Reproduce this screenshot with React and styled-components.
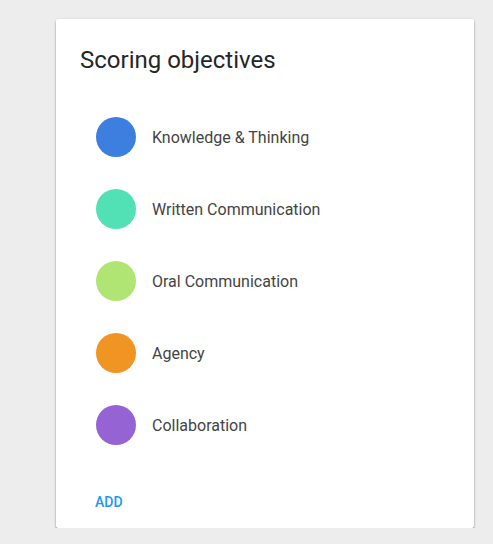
import React from "react";
import styled, { createGlobalStyle } from "styled-components";

const Global = createGlobalStyle`
  html, body { margin: 0; padding: 0; background: #ededed; }
  body { font-family: Roboto, "Liberation Sans", Arial, sans-serif; }
`;

const Page = styled.div`
  padding: 19px 0 0 56px;
`;

const Card = styled.section`
  width: 418px;
  min-height: 509px;
  box-sizing: border-box;
  background: #fff;
  border-radius: 2px;
  box-shadow: 0 2px 2px rgba(0, 0, 0, 0.42), 0 0 3px rgba(0, 0, 0, 0.1);
  display: flex;
  flex-direction: column;
`;

const Title = styled.h2`
  margin: 0;
  padding: 25px 24px 0;
  font-size: 24px;
  line-height: 32px;
  font-weight: 400;
  color: #262626;
`;

const List = styled.ul`
  list-style: none;
  margin: 0;
  padding: 25px 0 0 40px;
`;

const Item = styled.li`
  display: flex;
  align-items: center;
  gap: 16px;
  height: 72px;
`;

const Dot = styled.span`
  width: 40px;
  height: 40px;
  border-radius: 50%;
  background: ${(p) => p.$color};
  flex: none;
`;

const Label = styled.span`
  font-size: 16px;
  color: #444;
  margin-top: 1px;
`;

const Footer = styled.div`
  padding: 23px 0 8px 23px;
`;

const Button = styled.button`
  height: 36px;
  padding: 0 16px;
  border: none;
  background: transparent;
  font-family: inherit;
  font-size: 14px;
  font-weight: 500;
  text-transform: uppercase;
  color: #2196f3;
  cursor: pointer;
`;

const objectives = [
  { label: "Knowledge & Thinking", color: "#3c7fdf" },
  { label: "Written Communication", color: "#52e0b5" },
  { label: "Oral Communication", color: "#b0e574" },
  { label: "Agency", color: "#f09423" },
  { label: "Collaboration", color: "#9663d4" },
];

export default function App() {
  return (
    <Page>
      <Global />
      <Card>
        <Title>Scoring objectives</Title>
        <List>
          {objectives.map((o) => (
            <Item key={o.label}>
              <Dot $color={o.color} />
              <Label>{o.label}</Label>
            </Item>
          ))}
        </List>
        <Footer>
          <Button>Add</Button>
        </Footer>
      </Card>
    </Page>
  );
}
